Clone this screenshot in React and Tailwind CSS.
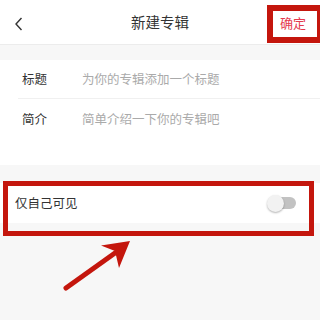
import React from "react";

export default function App() {
  const font = { fontFamily: '"Noto Sans CJK SC", "Noto Sans", sans-serif' };
  return (
    <div className="relative w-[320px] h-[320px] overflow-hidden bg-[#f7f7f7]" style={font}>
      {/* Header */}
      <div className="relative h-[45px] bg-white border-b border-[#ececec] flex items-center justify-center">
        <svg className="absolute left-[14px] top-[17px]" width="10" height="14" viewBox="0 0 10 14">
          <path d="M7.5 1 L2 7 L7.5 13" fill="none" stroke="#333" strokeWidth="1.4" strokeLinejoin="miter" />
        </svg>
        <span className="text-[14.5px] text-[#333] leading-none">新建专辑</span>
        <span className="absolute left-[280px] top-[16px] text-[13px] text-[#e53a4e] leading-none">确定</span>
      </div>

      {/* gap */}
      <div className="h-[15px]" />

      {/* Form section */}
      <div className="h-[105px] bg-white pl-[18px]">
        <div className="h-[39px] flex items-center border-b border-[#f0f0f0] text-[12.5px] leading-none">
          <span className="w-[64px] pl-[4px] text-[#333]">标题</span>
          <span className="text-[#aaa]">为你的专辑添加一个标题</span>
        </div>
        <div className="pt-[14px] flex text-[12.5px] leading-none">
          <span className="w-[64px] pl-[4px] text-[#333]">简介</span>
          <span className="text-[#aaa]">简单介绍一下你的专辑吧</span>
        </div>
      </div>

      {/* gap */}
      <div className="h-[18px]" />

      {/* Toggle row */}
      <div className="h-[40px] bg-white flex items-center justify-between pl-[15px] pr-[24px]">
        <span className="text-[12.5px] text-[#333] leading-none">仅自己可见</span>
        <div className="relative w-[29px] h-[17px] flex items-center">
          <div className="absolute left-[3px] right-0 h-[12px] rounded-full bg-[#c2c2c2]" />
          <div className="absolute left-0 w-[17px] h-[17px] rounded-full bg-[#f2f2f2] shadow-[0_1px_2px_rgba(0,0,0,0.3)]" />
        </div>
      </div>

      {/* Annotation overlays */}
      <div className="absolute left-[267px] top-[5px] w-[56px] h-[38px] border-[6px] border-[#c4160d]" />
      <div className="absolute left-[3px] top-[181px] w-[311px] h-[55px] border-[5px] border-[#c4160d]" />
      <svg className="absolute left-0 top-0" width="320" height="320" viewBox="0 0 320 320">
        <line x1="66" y1="288" x2="115" y2="253" stroke="#c4160d" strokeWidth="5" strokeLinecap="round" />
        <polygon points="130,241 101,245.5 115,251 119,268" fill="#c4160d" />
      </svg>
    </div>
  );
}
